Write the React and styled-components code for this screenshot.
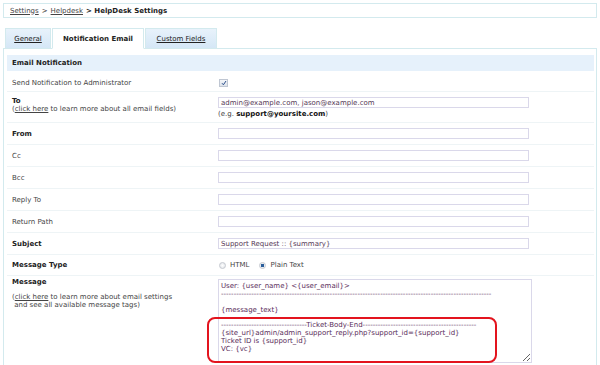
import React from 'react';
import styled, { createGlobalStyle } from 'styled-components';

const GlobalStyle = createGlobalStyle`
  body {
    margin: 0;
    background: #ffffff;
    font-family: "DejaVu Sans", Verdana, sans-serif;
    font-size: 7px;
    color: #333333;
  }
  * { box-sizing: border-box; }
`;

const Page = styled.div`
  padding: 3px 3px 0 3px;
  height: 365px;
  overflow: hidden;
`;

const Breadcrumb = styled.div`
  height: 15px;
  border: 1px solid #d3eaee;
  padding-left: 6px;
  display: flex;
  align-items: center;
  gap: 3px;
`;

const Crumb = styled.a`
  color: #444;
  text-decoration: underline;
`;

const Current = styled.span`
  font-weight: bold;
  color: #222;
`;

const TabBar = styled.div`
  display: flex;
  gap: 1px;
  margin: 10px 0 0 2px;
  position: relative;
  z-index: 1;
`;

const Tab = styled.div`
  width: ${({ $w }) => $w}px;
  height: 21px;
  display: flex;
  align-items: center;
  justify-content: center;
  border: 1px solid #d3eaee;
  border-bottom: ${({ $active }) => ($active ? '1px solid #ffffff' : '1px solid #d3eaee')};
  margin-bottom: -1px;
  background: ${({ $active }) =>
    $active ? '#ffffff' : 'linear-gradient(#e8f2fb, #d5e7f6)'};
  color: #222;
  font-weight: ${({ $active }) => ($active ? 'bold' : 'normal')};
  text-decoration: ${({ $active }) => ($active ? 'none' : 'underline')};
`;

const Panel = styled.div`
  border: 1px solid #d3eaee;
  border-bottom: none;
  padding: 6px 2px 0 3px;
  height: 330px;
`;

const SectionHeader = styled.div`
  height: 16px;
  background: #e6f1fb;
  padding-left: 5px;
  display: flex;
  align-items: center;
  font-weight: bold;
  color: #222;
`;

const Row = styled.div`
  display: grid;
  grid-template-columns: 206px 1fr;
  align-items: ${({ $top }) => ($top ? 'start' : 'center')};
  height: ${({ $h }) => $h}px;
  border-bottom: ${({ $last }) => ($last ? 'none' : '1px solid #eef4f6')};
  padding-left: 5px;
  padding-top: ${({ $pt }) => $pt || 0}px;
`;

const Label = styled.div`
  font-weight: ${({ $bold }) => ($bold ? 'bold' : 'normal')};
  color: ${({ $bold }) => ($bold ? '#222' : '#444')};
  line-height: 8px;
  margin-top: ${({ $mt }) => $mt || 0}px;
`;

const Hint = styled.div`
  font-weight: normal;
  color: #444;
  line-height: 8px;
  margin-top: ${({ $mt }) => $mt || 0}px;
  white-space: pre;
`;

const Link = styled.a`
  color: #444;
  text-decoration: underline;
`;

const Field = styled.div`
  display: flex;
  flex-direction: column;
  gap: 2px;
`;

const Input = styled.input`
  width: 311px;
  height: 11px;
  border: 1px solid #dad8ea;
  padding: 0 2px;
  font-family: inherit;
  font-size: 7px;
  color: #553855;
  outline: none;
  background: #fff;
`;

const Example = styled.div`
  color: #444;
  line-height: 8px;
  b { color: #111; }
`;

const Check = styled.span`
  width: 9px;
  height: 8px;
  border: 1px solid #bfc6d2;
  background: linear-gradient(#f4f6f9, #dde2ea);
  display: flex;
  align-items: center;
  justify-content: center;
  margin-left: 1px;
`;

const RadioGroup = styled.div`
  display: flex;
  align-items: center;
  color: #444;
`;

const Radio = styled.span`
  width: 7px;
  height: 7px;
  border-radius: 50%;
  border: 1px solid #c5c9d0;
  background: ${({ $on }) =>
    $on ? 'radial-gradient(circle, #2a5d9a 0 1.6px, #e9edf2 2px)' : 'radial-gradient(circle, #ffffff, #dde1e6)'};
  margin: 0 4px 0 ${({ $ml }) => $ml}px;
`;

const MessageWrap = styled.div`
  position: relative;
  width: 314px;
  margin-top: 3px;
`;

const MessageBox = styled.textarea`
  display: block;
  width: 314px;
  height: 84px;
  border: 1px solid #dad8ea;
  padding: 3px 2px;
  font-family: inherit;
  font-size: 7px;
  line-height: 7.85px;
  color: #5a2d5a;
  resize: both;
  overflow: hidden;
  white-space: pre;
  outline: none;
`;

// red annotation drawn over the textarea
const Highlight = styled.div`
  position: absolute;
  left: -11px;
  top: 38px;
  width: 290px;
  height: 46px;
  border: 2px solid #e3141e;
  border-radius: 8px;
  pointer-events: none;
`;

const dashes = (n) => '-'.repeat(n);

const messageText = [
  'User: {user_name} <{user_email}>',
  dashes(107),
  '',
  '{message_text}',
  '',
  dashes(34) + 'Ticket-Body-End' + dashes(45),
  '{site_url}admin/admin_support_reply.php?support_id={support_id}',
  'Ticket ID is {support_id}',
  'VC: {vc}',
].join('\n');

const simpleRows = [
  { label: 'From', bold: true },
  { label: 'Cc' },
  { label: 'Bcc' },
  { label: 'Reply To' },
  { label: 'Return Path' },
  { label: 'Subject', bold: true, value: 'Support Request :: {summary}' },
];

export default function App() {
  return (
    <>
      <GlobalStyle />
      <Page>
        <Breadcrumb>
          <Crumb>Settings</Crumb>
          <span>&gt;</span>
          <Crumb>Helpdesk</Crumb>
          <Current>&gt; HelpDesk Settings</Current>
        </Breadcrumb>

        <TabBar>
          <Tab $w={46}>General</Tab>
          <Tab $w={92} $active>Notification Email</Tab>
          <Tab $w={72}>Custom Fields</Tab>
        </TabBar>

        <Panel>
          <SectionHeader>Email Notification</SectionHeader>

          <Row $h={21} $pt={3}>
            <Label>Send Notification to Administrator</Label>
            <Check>
              <svg width="6" height="6" viewBox="0 0 6 6">
                <path d="M1 3.2 L2.4 4.8 L5 1" fill="none" stroke="#2b4f8c" strokeWidth="1" />
              </svg>
            </Check>
          </Row>

          <Row $h={31} $top $pt={5}>
            <div>
              <Label $bold>To</Label>
              <Hint>
                (<Link>click here</Link> to learn more about all email fields)
              </Hint>
            </div>
            <Field>
              <Input readOnly value="admin@example.com, jason@example.com" />
              <Example>
                (e.g. <b>support@yoursite.com</b>)
              </Example>
            </Field>
          </Row>

          {simpleRows.map((r) => (
            <Row key={r.label} $h={22}>
              <Label $bold={r.bold}>{r.label}</Label>
              <Input readOnly value={r.value || ''} />
            </Row>
          ))}

          <Row $h={21}>
            <Label $bold>Message Type</Label>
            <RadioGroup>
              <Radio $ml={1} />
              HTML
              <Radio $ml={10} $on />
              Plain Text
            </RadioGroup>
          </Row>

          <Row $h={95} $top $last>
            <div>
              <Label $bold $mt={2}>Message</Label>
              <Hint $mt={7}>
                (<Link>click here</Link> to learn more about email settings
              </Hint>
              <Hint>{' and see all available message tags)'}</Hint>
            </div>
            <MessageWrap>
              <MessageBox readOnly defaultValue={messageText} />
              <Highlight />
            </MessageWrap>
          </Row>
        </Panel>
      </Page>
    </>
  );
}
